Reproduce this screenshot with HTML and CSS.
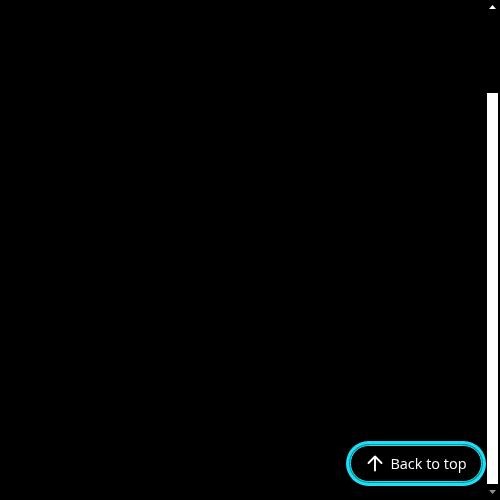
FILE: index.html
```html
<!DOCTYPE html>
<html lang="en">
<head>
<meta charset="utf-8">
<title>Back to top</title>
<link rel="stylesheet" href="styles.css">
</head>
<body>
<main class="page"></main>
<div class="scrollbar" aria-hidden="true">
  <div class="scrollbar__btn"><span class="scrollbar__arrow scrollbar__arrow--up"></span></div>
  <div class="scrollbar__track"><div class="scrollbar__thumb"></div></div>
  <div class="scrollbar__btn"><span class="scrollbar__arrow scrollbar__arrow--down"></span></div>
</div>
<button class="back-top" type="button" id="backTop">
  <svg class="back-top__icon" viewBox="0 0 18 18" width="18" height="18" aria-hidden="true">
    <path d="M9 16.5V2.5M2.5 9L9 2.5 15.5 9" fill="none" stroke="#fff" stroke-width="1.9" stroke-linecap="round" stroke-linejoin="round"/>
  </svg>
  <span>Back to top</span>
</button>
</body>
</html>
```

FILE: styles.css
```css
html {
  background: #000;
}
body {
  margin: 0;
  background: #000;
  font-family: "Open Sans", "Noto Sans", sans-serif;
  overflow: hidden;
}
.page {
  height: 500px;
}
.scrollbar {
  position: fixed;
  top: 0;
  right: 0;
  width: 15px;
  height: 100%;
  display: flex;
  flex-direction: column;
  background: #000;
}
.scrollbar__btn {
  height: 15px;
  flex: none;
  display: flex;
  justify-content: center;
}
.scrollbar__arrow {
  display: block;
  width: 7px;
  height: 4px;
}
.scrollbar__arrow--up {
  margin-top: 5px;
  background: #fff;
  clip-path: polygon(50% 0, 100% 100%, 0 100%);
}
.scrollbar__arrow--down {
  margin-top: 5px;
  background: #8c8c8c;
  clip-path: polygon(0 0, 100% 0, 50% 100%);
}
.scrollbar__track {
  flex: 1;
  padding: 78px 2px 0 2px;
}
.scrollbar__thumb {
  height: 391px;
  background: #fff;
}
.back-top {
  position: fixed;
  right: 18px;
  bottom: 18px;
  width: 132px;
  height: 37px;
  display: flex;
  align-items: center;
  justify-content: center;
  gap: 6px;
  padding: 0 0 0 1px;
  background: #000;
  color: #fff;
  border: 1px solid #1ee0f4;
  border-radius: 999px;
  box-shadow: 0 0 0 1px #128e9c, 0 0 0 4px #1ee0f4;
  font-family: "Open Sans", "Noto Sans", sans-serif;
  font-size: 14.5px;
  cursor: pointer;
  outline: none;
}
.back-top__icon {
  flex: none;
  margin-top: -1px;
}
```
